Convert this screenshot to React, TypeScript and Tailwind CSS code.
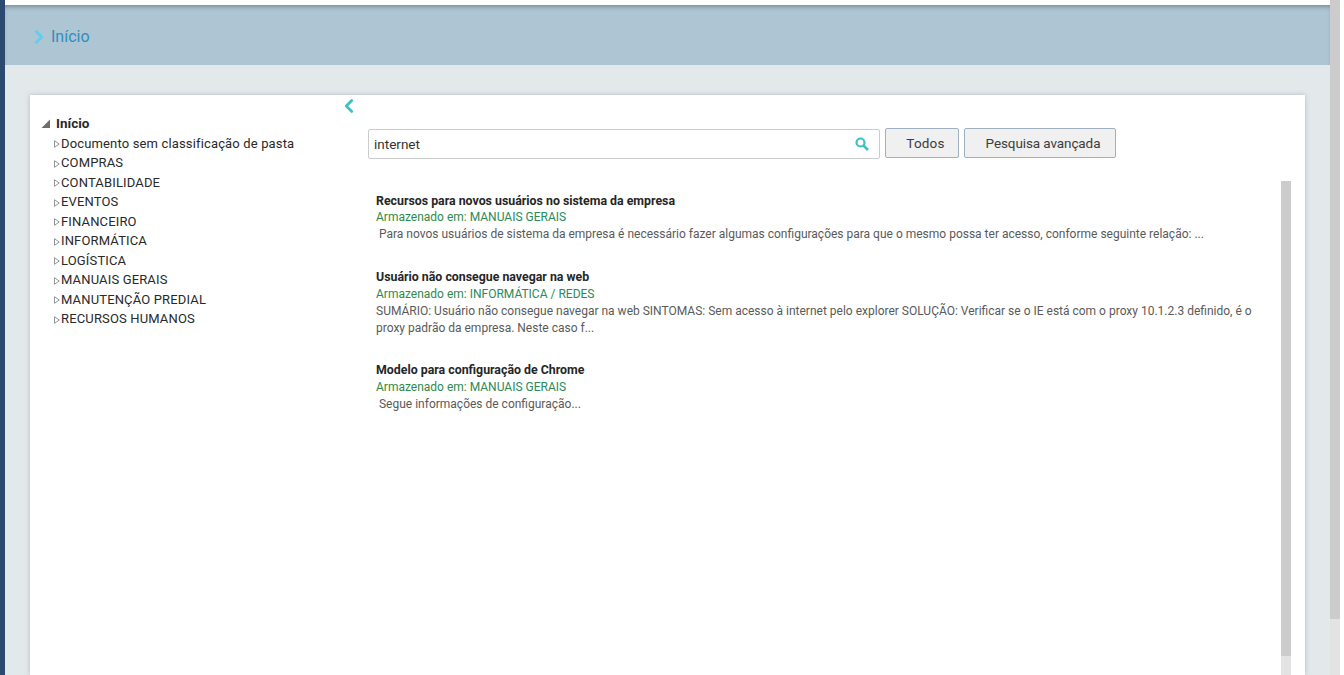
import { ChevronLeft, ChevronRight } from 'lucide-react';

const folders = [
  'Documento sem classificação de pasta',
  'COMPRAS',
  'CONTABILIDADE',
  'EVENTOS',
  'FINANCEIRO',
  'INFORMÁTICA',
  'LOGÍSTICA',
  'MANUAIS GERAIS',
  'MANUTENÇÃO PREDIAL',
  'RECURSOS HUMANOS',
];

const results = [
  {
    title: 'Recursos para novos usuários no sistema da empresa',
    place: 'MANUAIS GERAIS',
    text: ' Para novos usuários de sistema da empresa é necessário fazer algumas configurações para que o mesmo possa ter acesso, conforme seguinte relação: ...',
    titleLine: 'leading-[16px]',
    gap: 'mb-[26px]',
  },
  {
    title: 'Usuário não consegue navegar na web',
    place: 'INFORMÁTICA / REDES',
    text: 'SUMÁRIO: Usuário não consegue navegar na web SINTOMAS: Sem acesso à internet pelo explorer SOLUÇÃO: Verificar se o IE está com o proxy 10.1.2.3 definido, é o proxy padrão da empresa. Neste caso f...',
    titleLine: 'leading-[17px]',
    gap: 'mb-[25px]',
  },
  {
    title: 'Modelo para configuração de Chrome',
    place: 'MANUAIS GERAIS',
    text: ' Segue informações de configuração...',
    titleLine: 'leading-[17px]',
    gap: '',
  },
];

const Scrollbar = ({ thumb, className }: { thumb: string; className: string }) => (
  <div className={`flex w-[10px] flex-col bg-[#e3e3e3] ${className}`}>
    <div className={`bg-[#cccccc] ${thumb}`} />
  </div>
);

export default function App() {
  return (
    <div className="flex h-[675px] w-[1344px] overflow-hidden bg-white font-['Roboto',sans-serif]">
      <div className="w-[5px] shrink-0 bg-[#2c4a70]" />

      <div className="flex w-[1325px] shrink-0 flex-col bg-[#e3e8eb]">
        <div className="h-[5px] shrink-0 bg-white" />
        <header className="flex h-[60px] shrink-0 items-center bg-[#aec5d3] pt-[3px] pl-[22.5px] shadow-[inset_0_4px_4px_-2px_rgba(70,90,100,0.5)]">
          <ChevronRight className="mr-[1.5px] h-[22px] w-[22px] text-[#5cd0ee]" strokeWidth={3} />
          <span className="text-[16px] text-[#2f8fbe]">Início</span>
        </header>

        <main className="mt-[30px] ml-[25px] flex w-[1275px] flex-1 bg-white shadow-[0_0_5px_rgba(90,110,120,0.35)]">
          <aside className="relative w-[338px] shrink-0 pt-[19px] pl-[11px] text-[13px] text-[#292929]">
            <div className="flex h-[19px] items-center text-[13.5px] font-bold">
              <svg className="mr-[6px] h-[9px] w-[9px]" viewBox="0 0 9 9">
                <path d="M9 0.5V9H0.5Z" fill="#6d6d6d" />
              </svg>
              <span>Início</span>
            </div>
            <ul className="pt-[0.6px]">
              {folders.map((name) => (
                <li key={name} className="flex h-[19.5px] items-center pl-[13px] tracking-[0.15px]">
                  <svg className="mt-[2px] mr-[1px] h-[8px] w-[6px] shrink-0" viewBox="0 0 6 8">
                    <path d="M0.5 0.7L5.2 4L0.5 7.3Z" fill="white" stroke="#8a8a8a" strokeWidth="0.9" />
                  </svg>
                  <span>{name}</span>
                </li>
              ))}
            </ul>
          </aside>

          <div className="relative flex flex-1 flex-col">
            <ChevronLeft
              className="absolute top-0 left-[-30.5px] h-[22px] w-[22px] text-[#3fc0c4]"
              strokeWidth={3}
            />
            <div className="mt-[34px] flex items-start">
              <div className="flex h-[30px] w-[512px] items-center justify-between rounded-[2px] border border-[#cccccc] bg-white pr-[10px] pl-[5px] text-[13.5px] text-[#333333]">
                <span>internet</span>
                <svg className="h-[14px] w-[14px]" viewBox="0 0 14 14" fill="none" stroke="#3fc0c4">
                  <circle cx="5.5" cy="5.5" r="4" strokeWidth="2.2" />
                  <path d="M8.5 8.5L13 13" strokeWidth="2.6" />
                </svg>
              </div>
              <button className="mt-[-1px] ml-[5px] h-[30px] w-[74px] rounded-[2px] border border-[#9fb1c0] bg-[#f0f0f0] pl-[7px] text-[13.5px] tracking-[0.2px] text-[#3d3d3d]">
                Todos
              </button>
              <button className="mt-[-1px] ml-[5px] h-[30px] w-[152px] rounded-[2px] border border-[#9fb1c0] bg-[#f0f0f0] pl-[6px] text-[13.5px] tracking-[-0.1px] text-[#3d3d3d]">
                Pesquisa avançada
              </button>
            </div>

            <div className="mt-[22px] flex flex-1">
              <div className="w-[913px] shrink-0 pt-[12px] pl-[8px] text-[12px] leading-[17px]">
                {results.map((r) => (
                  <article key={r.title} className={r.gap}>
                    <h3 className={`text-[12.35px] font-bold text-[#262626] ${r.titleLine}`}>{r.title}</h3>
                    <p className="text-[#2f8a4a]">
                      Armazenado em: <span className="text-[#2a8a5c]">{r.place}</span>
                    </p>
                    <p className="whitespace-pre-wrap text-[#5a5a5a]">{r.text}</p>
                  </article>
                ))}
              </div>
              <Scrollbar thumb="h-[475px]" className="h-[494px]" />
            </div>
          </div>
        </main>
      </div>

      <Scrollbar thumb="h-[619px]" className="h-[675px] shrink-0" />
    </div>
  );
}
